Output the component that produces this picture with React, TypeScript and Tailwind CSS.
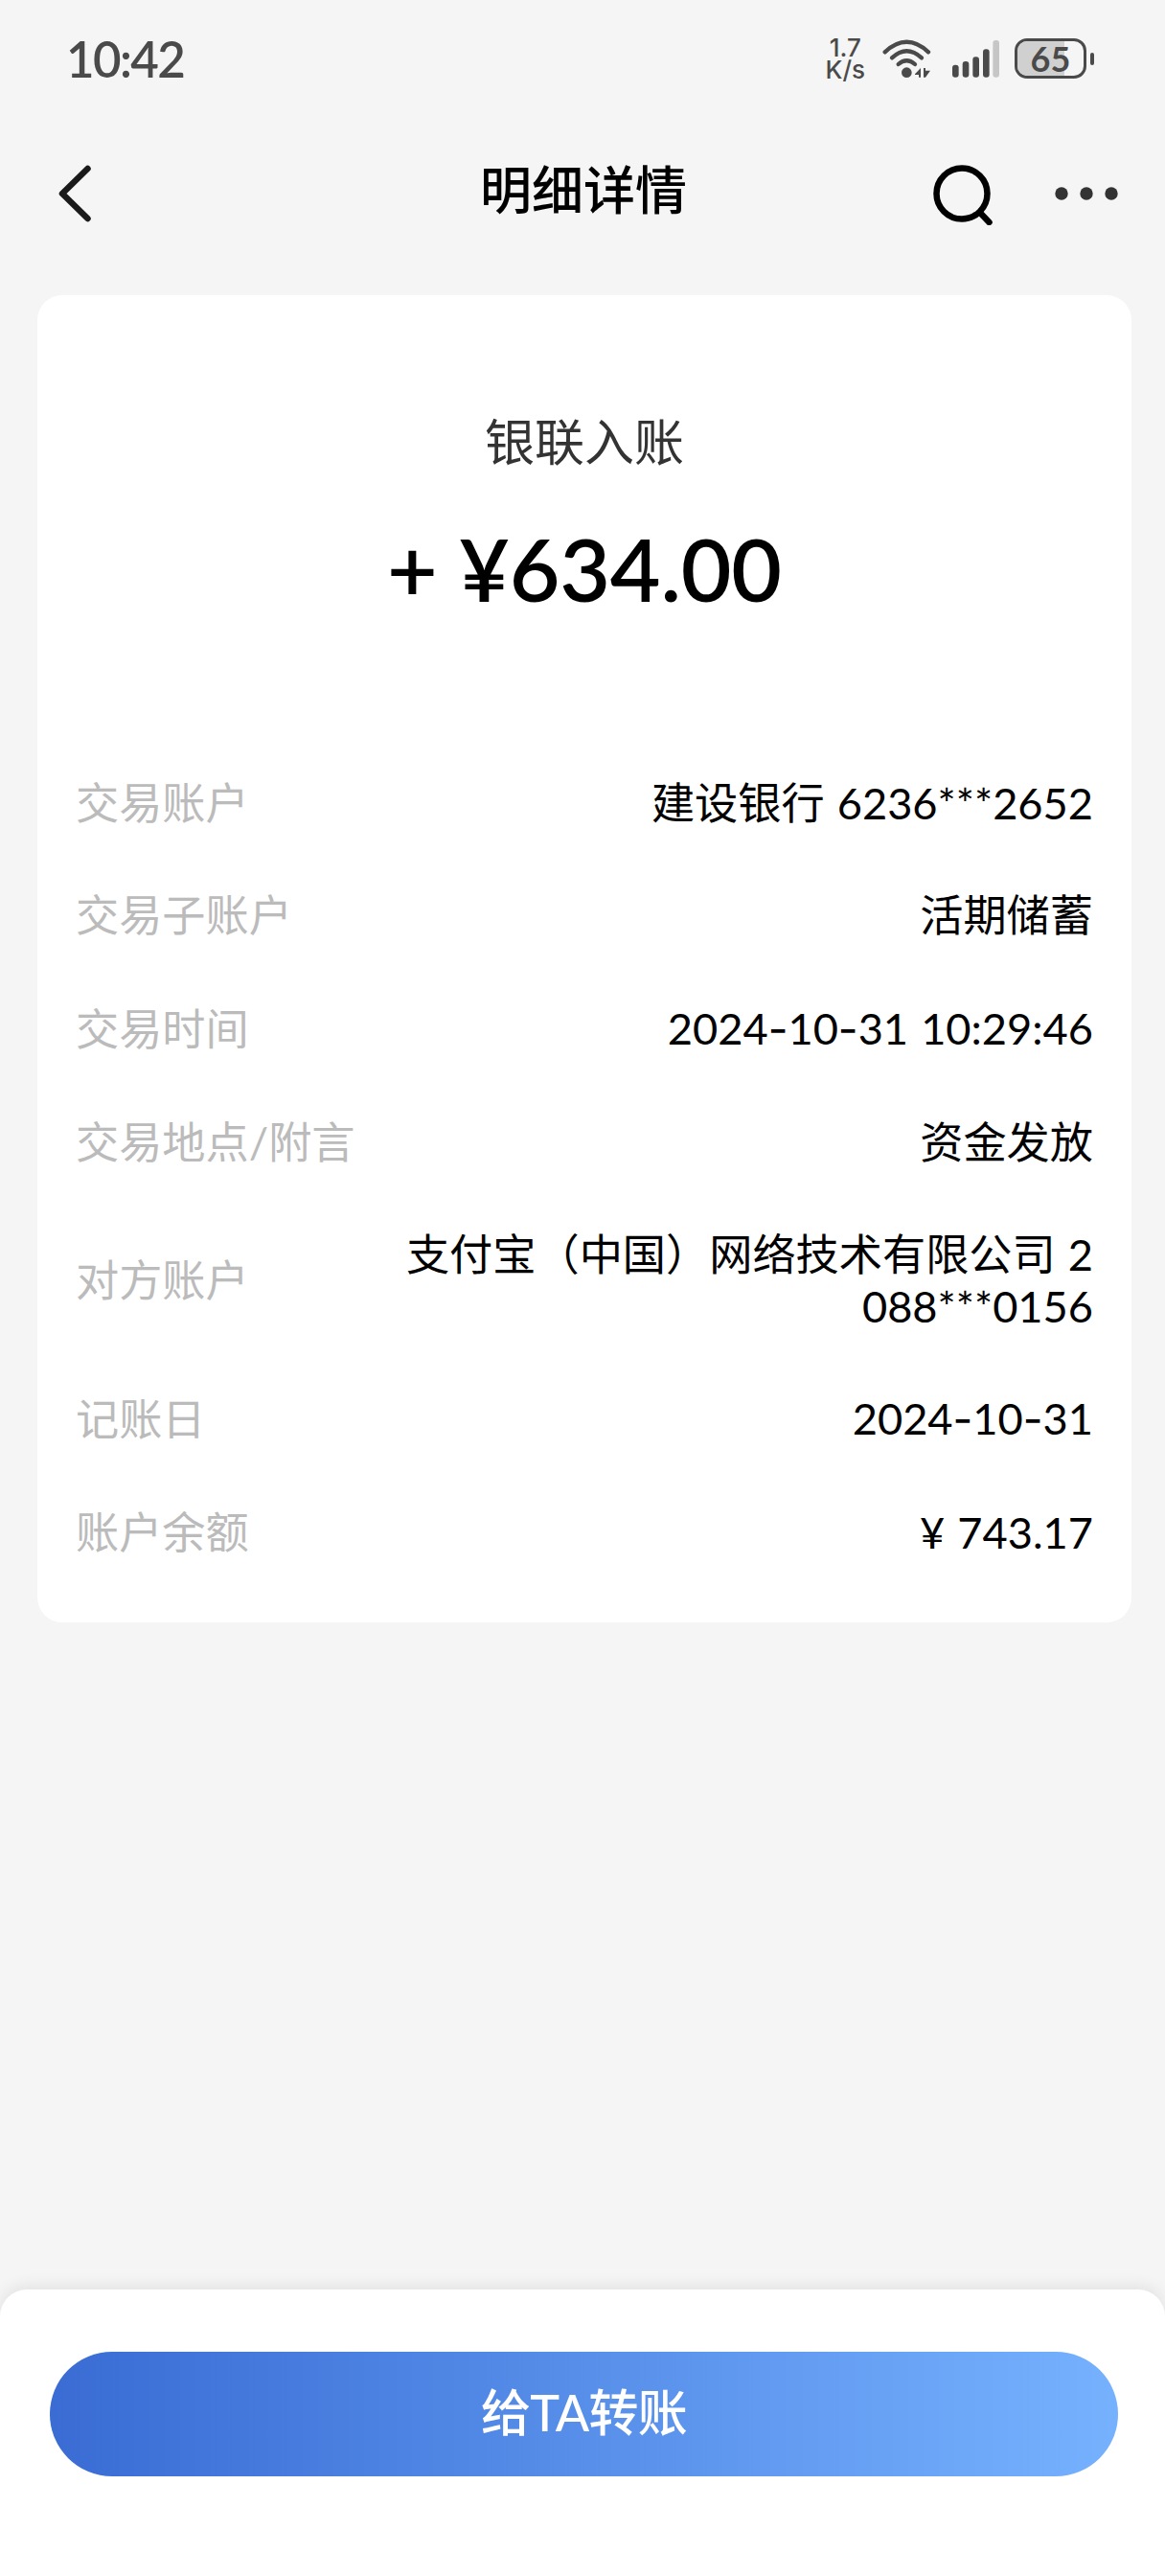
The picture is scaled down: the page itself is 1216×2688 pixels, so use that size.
const details = [
  { label: "交易账户", value: "建设银行 6236***2652" },
  { label: "交易子账户", value: "活期储蓄" },
  { label: "交易时间", value: "2024-10-31 10:29:46" },
  { label: "交易地点/附言", value: "资金发放" },
  { label: "对方账户", value: "支付宝（中国）网络技术有限公司 2088***0156" },
  { label: "记账日", value: "2024-10-31" },
  { label: "账户余额", value: "¥ 743.17" },
];

function WifiIcon() {
  return (
    <svg className="h-[42px] w-[51px]" viewBox="241 59 153 126" fill="none">
      <g stroke="#4a4a4a" strokeWidth="13" strokeLinecap="round">
        <path d="M249 102Q317 39 385 102" />
        <path d="M271 120Q317 77 364 120" />
        <path d="M291 140Q317 117 343 140" />
      </g>
      <circle cx="317" cy="166" r="16" fill="#4a4a4a" />
      <path d="M343 171L361 152V181H355V173H343ZM370 152H376V160H391L376 181H370Z" fill="#4a4a4a" />
    </svg>
  );
}

function SignalIcon() {
  return (
    <svg className="h-[42px] w-[49px]" viewBox="462 59 147 126">
      <g fill="#4a4a4a">
        <rect x="462" y="142" width="20" height="39" rx="9" />
        <rect x="494" y="131" width="20" height="50" rx="9" />
        <rect x="526" y="117" width="20" height="64" rx="9" />
        <rect x="558" y="93" width="20" height="88" rx="9" />
      </g>
      <rect x="589" y="65" width="20" height="116" rx="9" fill="#c6c6c6" />
    </svg>
  );
}

function StatusBar() {
  return (
    <div className="flex h-[122px] items-center justify-between pr-[74px] pl-[69px] text-[#4a4a4a]">
      <span className="text-[51px] leading-none font-semibold tracking-[-1.6px]">10:42</span>
      <div className="flex items-center">
        <div className="mr-[18px] flex flex-col items-center font-['Inter','Noto_Sans_CJK_SC',sans-serif] text-[26px] leading-[23px] font-medium">
          <span>1.7</span>
          <span>K/s</span>
        </div>
        <WifiIcon />
        <div className="w-[22px]" />
        <SignalIcon />
        <div className="relative ml-[16px] flex h-[42px] w-[75px] items-center justify-center overflow-hidden rounded-[13px] border-[3px] border-[#4a4a4a]">
          <div className="absolute inset-y-0 left-0 w-[49px] bg-[#d0d0d0]" />
          <span className="relative text-[36px] leading-none font-bold">65</span>
        </div>
        <div className="ml-1 h-[13px] w-[4px] rounded-full bg-[#4a4a4a]" />
      </div>
    </div>
  );
}

function Header() {
  return (
    <div className="grid h-[160px] grid-cols-[1fr_auto_1fr] items-center pr-[49px] pl-[51px]">
      <svg className="ml-[9px] h-[60px] w-[36px]" viewBox="0 0 36 60" fill="none" stroke="#1a1a1a" strokeWidth="6.5" strokeLinecap="round" strokeLinejoin="round">
        <path d="M31.5 4L5 30L31.5 56" />
      </svg>
      <h1 className="pb-[6px] text-[54px] leading-[60px] font-medium text-black">明细详情</h1>
      <div className="flex items-center justify-end">
        <svg className="h-[66px] w-[66px]" viewBox="0 0 66 66" fill="none" stroke="#000" strokeWidth="6.5" strokeLinecap="round">
          <circle cx="33" cy="33" r="26.5" />
          <path d="M52.5 53.5L61.5 63" />
        </svg>
        <svg className="ml-[64px] h-[16px] w-[66px]" viewBox="0 0 66 16" fill="#333">
          <circle cx="7" cy="8" r="6.7" />
          <circle cx="33" cy="8" r="6.7" />
          <circle cx="59" cy="8" r="6.7" />
        </svg>
      </div>
    </div>
  );
}

// the dash of the number font is too short, so dates borrow Inter's
function Value({ text }: { text: string }) {
  return (
    <span className="w-[732px] text-right [word-spacing:1.5px] break-all text-black">
      {text.split("-").map((part, i) => (
        <span key={i}>
          {i > 0 && <span className="font-['Inter']">-</span>}
          {part}
        </span>
      ))}
    </span>
  );
}

export default function App() {
  return (
    <div className="flex h-[2688px] w-[1216px] flex-col overflow-hidden bg-[#f5f5f5] font-['Lato','Noto_Sans_CJK_SC',sans-serif]">
      <StatusBar />
      <Header />

      <div className="mt-[26px] mr-[35px] ml-[39px] h-[1385px] rounded-[26px] bg-white px-[40px]">
        <div className="flex flex-col items-center pt-[121px]">
          <p className="text-[52px] leading-[64px] text-[#333]">银联入账</p>
          <p className="mt-[45px] text-[91px] leading-[110px] font-semibold tracking-[-0.2px] text-black">+ ¥634.00</p>
        </div>

        <div className="mt-[130.5px] flex flex-col">
          {details.map((item) => (
            <div key={item.label} className="flex items-center justify-between py-[32.2px] text-[45.2px] leading-[53.3px]">
              <span className="text-[#bbb]">{item.label}</span>
              <Value text={item.value} />
            </div>
          ))}
        </div>
      </div>

      <div className="mt-auto h-[299px] rounded-t-[28px] bg-white px-[52px] pt-[65px] shadow-[0_-4px_16px_rgba(0,0,0,0.08)]">
        <button className="flex h-[130px] w-[1115px] items-center justify-center rounded-full bg-linear-to-r from-[#3a6cd4] to-[#76b1fe] pb-[5px] text-[52px] font-medium tracking-[-0.7px] text-white">
          给TA转账
        </button>
      </div>
    </div>
  );
}
